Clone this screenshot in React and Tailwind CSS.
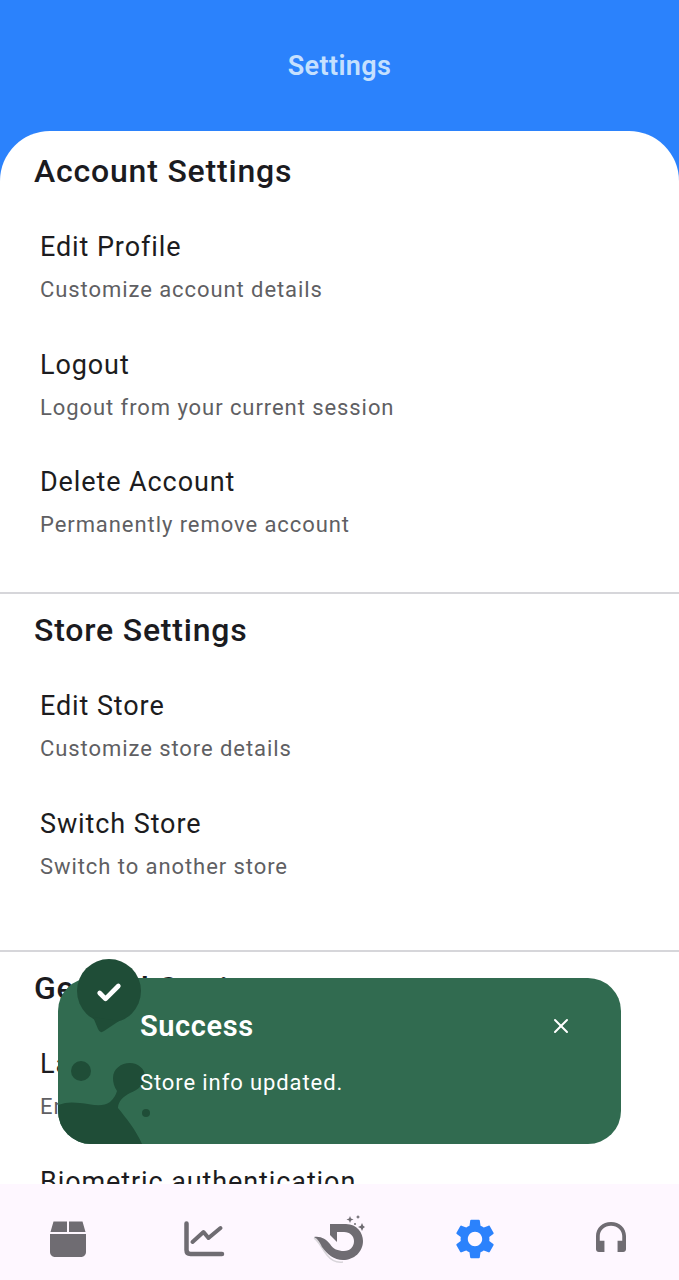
import { Check, X } from 'lucide-react';

const sections = [
  {
    title: 'Account Settings',
    height: 'h-[459px]',
    items: [
      ['Edit Profile', 'Customize account details'],
      ['Logout', 'Logout from your current session'],
      ['Delete Account', 'Permanently remove account'],
    ],
  },
  {
    title: 'Store Settings',
    height: 'h-[358px]',
    items: [
      ['Edit Store', 'Customize store details'],
      ['Switch Store', 'Switch to another store'],
    ],
  },
  {
    title: 'General Settings',
    height: '',
    items: [
      ['Language', 'Enable app language'],
      ['Biometric authentication', 'Enable biometric login'],
    ],
  },
];

function Section({ section }) {
  return (
    <section className={`${section.height} shrink-0 px-[34px] pt-[16px]`}>
      <h2 className="h-[40px] text-[32px] leading-[40px] font-medium tracking-[0.8px] text-[#1b1b1f]">{section.title}</h2>
      <div className="flex flex-col gap-[30.5px] pt-[36px] pl-[6px]">
        {section.items.map(([name, sub]) => (
          <div key={name} className="h-[87px]">
            <div className="h-[42px] text-[27px] leading-[40px] tracking-[0.9px] text-[#1c1c20]">{name}</div>
            <div className="text-[22px] leading-[42px] tracking-[0.93px] text-[#5f5f63]">{sub}</div>
          </div>
        ))}
      </div>
    </section>
  );
}

function PackageIcon() {
  return (
    <svg width="36" height="36" viewBox="0 0 36 36" fill="#6f6c72">
      <path d="M3.5 0.5H17V11H0.5L3.5 0.5Z M19 0.5H32.5L35.5 11H19V0.5Z" />
      <path d="M0 13H36V31C36 33.8 33.8 36 31 36H5C2.2 36 0 33.8 0 31V13Z" />
    </svg>
  );
}

function ChartIcon() {
  return (
    <svg width="42" height="36" viewBox="0 0 42 36" fill="none" stroke="#6f6c72" strokeLinecap="round" strokeLinejoin="round">
      <path d="M3.5 2.5V29C3.5 31.5 5 33 7.5 33H39" strokeWidth="4.5" />
      <path d="M9.5 21L20.5 11L25.5 17L37.5 7" strokeWidth="4" />
    </svg>
  );
}

function ReturnLogo() {
  return (
    <svg width="52" height="50" viewBox="0 0 52 50">
      <path d="M1 24C6 27 9 35 14 41C18 46 24 49 30 48" fill="none" stroke="#d8d5da" strokeWidth="1.5" />
      <path
        d="M17 10H33C44 10 50 19 50 27C50 38 41 46 30 46C21 46 14 40 9 33C7 29 5 25 1 23C8 22 13 25 17 30C20 35 25 37 31 37C37 37 41 33 41 27C41 22 37 18 31 18H24V28L17 21V10Z"
        fill="#6f6c72"
      />
      <g fill="#6f6c72">
        <path d="M37 2L38 4.5L40.5 5.5L38 6.5L37 9L36 6.5L33.5 5.5L36 4.5Z" />
        <path d="M45 1L45.7 2.3L47 3L45.7 3.7L45 5L44.3 3.7L43 3L44.3 2.3Z" />
        <path d="M49 9L50.2 11.8L52 13L50.2 14.2L49 17L47.8 14.2L45 13L47.8 11.8Z" />
        <circle cx="42" cy="10" r="1" />
      </g>
    </svg>
  );
}

function GearIcon() {
  return (
    <svg width="40" height="40" viewBox="2 2 20 20" fill="#2b82fc">
      <path d="M19.14 12.94c.04-.3.06-.61.06-.94 0-.32-.02-.64-.07-.94l2.03-1.58c.18-.14.23-.41.12-.61l-1.92-3.32c-.12-.22-.37-.29-.59-.22l-2.39.96c-.5-.38-1.03-.7-1.62-.94l-.36-2.54c-.04-.24-.24-.41-.48-.41h-3.84c-.24 0-.43.17-.47.41l-.36 2.54c-.59.24-1.13.57-1.62.94l-2.39-.96c-.22-.08-.47 0-.59.22L2.74 8.87c-.12.21-.08.47.12.61l2.03 1.58c-.05.3-.09.63-.09.94s.02.64.07.94l-2.03 1.58c-.18.14-.23.41-.12.61l1.92 3.32c.12.22.37.29.59.22l2.39-.96c.5.38 1.03.7 1.62.94l.36 2.54c.05.24.24.41.48.41h3.84c.24 0 .44-.17.47-.41l.36-2.54c.59-.24 1.13-.56 1.62-.94l2.39.96c.22.08.47 0 .59-.22l1.92-3.32c.12-.22.07-.47-.12-.61l-2.01-1.58zM12 15.6c-1.98 0-3.6-1.62-3.6-3.6s1.62-3.6 3.6-3.6 3.6 1.62 3.6 3.6-1.62 3.6-3.6 3.6z" />
    </svg>
  );
}

function HeadsetIcon() {
  return (
    <svg width="30" height="30" viewBox="0 0 32 32" fill="#6f6c72" className="mb-[4px]">
      <path d="M0 24V15C0 6.5 7 0 16 0C25 0 32 6.5 32 15V24H28V15C28 8.8 22.8 4 16 4C9.2 4 4 8.8 4 15V24H0Z" />
      <path d="M0 20H9V32H3C1.3 32 0 30.7 0 29V20Z M23 20H32V29C32 30.7 30.7 32 29 32H23V20Z" />
    </svg>
  );
}

function Toast() {
  return (
    <div className="absolute top-[978px] left-[58px] h-[166px] w-[563px] rounded-[33px] bg-[#316b50]">
      {/* blobs in the lower left corner */}
      <div className="absolute inset-0 overflow-hidden rounded-[33px]">
        <svg width="100" height="166" viewBox="0 0 100 166" fill="#1f4d37" className="absolute top-0 left-0">
          <circle cx="23" cy="93" r="10" />
          <circle cx="88" cy="135" r="4" />
          <path d="M0 127C8 124 14 124 22 125C32 126 44 130 52 124C56 120 58 117 59 113C56 109 55 104 55 100C55 91 63 85 72 85C80 85 87 91 87 98C87 106 80 112 72 115C66 118 60 123 60 130C68 140 78 152 84 166H0Z" />
        </svg>
      </div>
      <svg width="64" height="76" viewBox="0 0 64 76" fill="#1f4d37" className="absolute -top-[19px] left-[19px]">
        <circle cx="32" cy="32" r="32" />
        <path d="M16 58L21 70Q23 75 27 72L42 62Z" />
      </svg>
      <Check size={28} strokeWidth={4} color="#ffffff" className="absolute top-[1px] left-[37px]" />
      <div className="absolute top-[31px] left-[82px] text-[29px] leading-[34px] font-semibold tracking-[0.6px] text-white">Success</div>
      <div className="absolute top-[91px] left-[82px] text-[22px] leading-[28px] tracking-[0.9px] text-white">Store info updated.</div>
      <X size={24} strokeWidth={2} color="#ffffff" className="absolute top-[36px] left-[491px]" />
    </div>
  );
}

export default function App() {
  return (
    <div className="relative flex h-[1280px] w-[679px] flex-col overflow-hidden bg-[#2b82fc] font-['Roboto',sans-serif]">
      <header className="flex h-[131px] shrink-0 items-center justify-center">
        <h1 className="relative top-[1px] text-[27px] font-semibold tracking-[0.4px] text-[#c5e0fe]">Settings</h1>
      </header>

      <main className="flex min-h-0 flex-1 flex-col divide-y-2 divide-[#d6d6da] overflow-hidden rounded-t-[50px] bg-white pt-[4px]">
        {sections.map((s) => (
          <Section key={s.title} section={s} />
        ))}
      </main>

      <nav className="grid h-[96px] shrink-0 grid-cols-5 items-center justify-items-center bg-[#fef7ff] pt-[14px]">
        <PackageIcon />
        <ChartIcon />
        <ReturnLogo />
        <GearIcon />
        <HeadsetIcon />
      </nav>

      <Toast />
    </div>
  );
}
